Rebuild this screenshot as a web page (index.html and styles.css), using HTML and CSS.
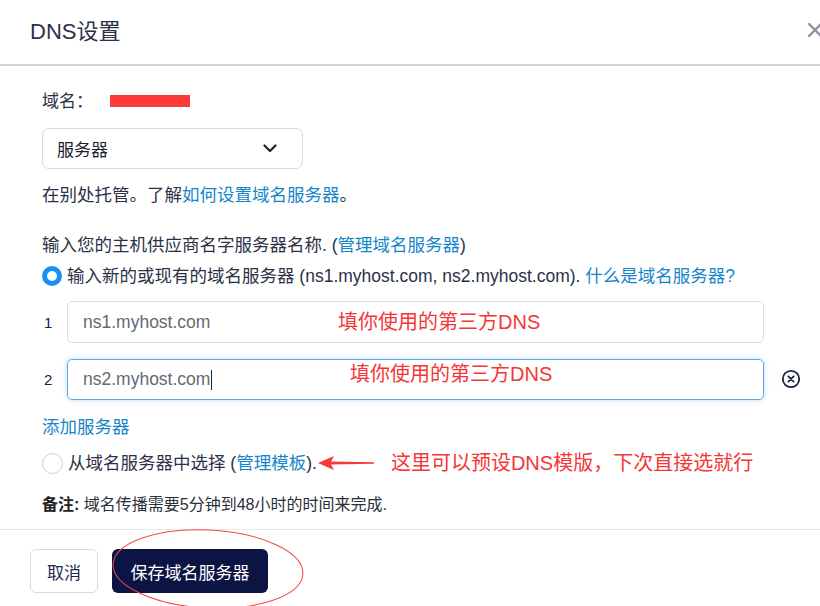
FILE: index.html
```html
<!DOCTYPE html>
<html lang="zh-CN">
<head>
    <meta charset="UTF-8">
    <title>DNS设置</title>
    <link rel="stylesheet" href="styles.css">
</head>
<body>
<div class="modal">
    <!-- Header -->
    <div class="modal-header">
        <h2 class="modal-title">DNS设置</h2>
        <svg class="modal-close" width="16" height="16" viewBox="0 0 16 16"><path d="M2 2 L14 14 M14 2 L2 14" stroke="#8c94a6" stroke-width="2.4" stroke-linecap="round"/></svg>
    </div>

    <div class="modal-body">
        <div class="domain">域名：<span class="masked">y</span></div>

        <div class="select">
            <span>服务器</span>
            <svg class="chevron" width="14" height="9" viewBox="0 0 14 9"><path d="M1.5 1.5 L7 7 L12.5 1.5" fill="none" stroke="#1b2033" stroke-width="2.2" stroke-linecap="round" stroke-linejoin="round"/></svg>
        </div>

        <p class="hint">在别处托管。了解<a href="#">如何设置域名服务器</a>。</p>

        <p class="prompt">输入您的主机供应商名字服务器名称. (<a href="#">管理域名服务器</a>)</p>

        <label class="radio-row">
            <span class="radio checked"></span>
            <span>输入新的或现有的域名服务器 (ns1.myhost.com, ns2.myhost.com). <a href="#">什么是域名服务器?</a></span>
        </label>

        <!-- Name servers -->
        <div class="ns-row first">
            <span class="ns-num">1</span>
            <div class="ns-field">
                <input type="text" value="ns1.myhost.com">
                <span class="note-red note-1">填你使用的第三方DNS</span>
            </div>
        </div>
        <div class="ns-row second">
            <span class="ns-num">2</span>
            <div class="ns-field">
                <div class="input focused">ns2.myhost.com<span class="caret"></span></div>
                <span class="note-red note-2">填你使用的第三方DNS</span>
            </div>
            <svg class="remove" width="20" height="20" viewBox="0 0 20 20"><circle cx="10" cy="10" r="8.2" fill="none" stroke="#1c2340" stroke-width="1.8"/><path d="M7.4 7.4 L12.6 12.6 M12.6 7.4 L7.4 12.6" stroke="#1c2340" stroke-width="1.8" stroke-linecap="round"/></svg>
        </div>

        <a class="add" href="#">添加服务器</a>

        <label class="radio-row second-choice">
            <span class="radio"></span>
            <span>从域名服务器中选择 (<a href="#">管理模板</a>).</span>
            <svg class="arrow" width="58" height="14" viewBox="0 0 58 14"><polygon points="0,7 16,0 13,5.5 56,6.2 56,7.8 13,8.5 16,14" fill="#f53a3a"/></svg>
            <span class="note-red note-3">这里可以预设DNS模版，下次直接选就行</span>
        </label>

        <p class="note"><b>备注:</b> 域名传播需要5分钟到48小时的时间来完成.</p>
    </div>

    <!-- Footer -->
    <div class="modal-footer">
        <button class="btn btn-cancel">取消</button>
        <button class="btn btn-save">保存域名服务器</button>
        <svg class="ellipse" width="200" height="86" viewBox="0 0 200 86"><ellipse cx="100" cy="43" rx="95" ry="39" transform="rotate(3 100 43)" fill="none" stroke="#f04848" stroke-width="1"/></svg>
    </div>
</div>
</body>
</html>
```

FILE: styles.css
```css
body {
    margin: 0;
    font-family: "Liberation Sans", "Noto Sans CJK SC", sans-serif;
    color: #2b3246;
    background: #fff;
    overflow: hidden;
}

a {
    color: #1686c9;
    text-decoration: none;
}

p {
    margin: 0;
}

.modal {
    width: 820px;
    height: 606px;
    overflow: hidden;
}

.modal-header {
    height: 64px;
    display: flex;
    align-items: center;
    justify-content: space-between;
    padding-left: 30px;
    border-bottom: 2px solid #cdd1da;
}

.modal-title {
    margin: 0;
    margin-top: -6px;
    font-size: 22px;
    font-weight: normal;
    color: #2c3344;
}

.modal-close {
    margin-right: -3px;
    margin-top: -4px;
}

.modal-body {
    padding-left: 42px;
    font-size: 17.5px;
}

.domain {
    line-height: 24px;
    margin-top: 24px;
    font-size: 17px;
}

.masked {
    display: inline-block;
    width: 80px;
    height: 12px;
    margin-left: 17px;
    background: #fc3a3a;
    color: transparent;
    vertical-align: -5px;
}

.select {
    margin-top: 14px;
    width: 261px;
    height: 41px;
    box-sizing: border-box;
    border: 1px solid #d6dbe4;
    border-radius: 7px;
    display: flex;
    align-items: center;
    justify-content: space-between;
    padding: 0 25px 0 14px;
    font-size: 17px;
    color: #1b2033;
}

.hint {
    margin-top: 14px;
    line-height: 24px;
}

.prompt {
    margin-top: 26px;
    line-height: 24px;
}

.radio-row {
    display: flex;
    align-items: center;
    line-height: 24px;
    margin-top: 7px;
    white-space: nowrap;
}

.radio {
    width: 20px;
    height: 20px;
    box-sizing: border-box;
    border-radius: 50%;
    border: 1px solid #c7cde0;
    margin-right: 5px;
    flex: none;
}

.radio.checked {
    border: 5.5px solid #1890f5;
}

.ns-row {
    display: flex;
    align-items: center;
}

.ns-row.first {
    margin-top: 13px;
    height: 42px;
}

.ns-row.second {
    margin-top: 16px;
    height: 41px;
}

.ns-num {
    width: 25px;
    box-sizing: border-box;
    padding-left: 2px;
    font-size: 15px;
    color: #1b2240;
}

.ns-field {
    position: relative;
    width: 697px;
    height: 100%;
}

.ns-field input,
.ns-field .input {
    width: 100%;
    height: 100%;
    box-sizing: border-box;
    border: 1px solid #d9dde4;
    border-radius: 5px;
    padding: 0 15px;
    font-family: inherit;
    font-size: 17.5px;
    color: #666a70;
    outline: none;
}

.ns-field .input {
    display: flex;
    align-items: center;
}

.ns-field .focused {
    border-color: #62a7e6;
    box-shadow: 0 0 5px rgba(98, 167, 230, 0.45);
}

.caret {
    display: inline-block;
    width: 1px;
    height: 20px;
    background: #222;
    margin-left: 1px;
}

.note-red {
    position: absolute;
    color: #f53636;
    font-size: 20px;
    line-height: 26px;
    white-space: nowrap;
}

.note-1 {
    left: 271px;
    top: 8px;
}

.note-2 {
    left: 283px;
    top: 2px;
}

.remove {
    margin-left: 17px;
    margin-top: -2px;
}

.add {
    display: block;
    line-height: 24px;
    margin-top: 15px;
    width: max-content;
}

.radio-row.second-choice {
    margin-top: 11px;
    position: relative;
}

.second-choice .radio {
    width: 21px;
    height: 21px;
}

.arrow {
    margin-left: 1px;
}

.note-3 {
    position: static;
    font-size: 20px;
    margin-left: 15px;
}

.note {
    margin-top: 17px;
    line-height: 24px;
    font-size: 16px;
    color: #2b2f38;
}

.note b {
    color: #222;
}

.modal-footer {
    position: relative;
    margin-top: 12px;
    border-top: 1px solid #e7e9ee;
    padding: 19px 0 0 30px;
    display: flex;
    gap: 14px;
}

.btn {
    height: 44px;
    border-radius: 6px;
    font-family: inherit;
    font-size: 17px;
    cursor: pointer;
}

.btn-cancel {
    width: 68px;
    background: #fff;
    border: 1px solid #d6dbe4;
    color: #1e2a4a;
}

.btn-save {
    width: 156px;
    background: #0b1442;
    border: none;
    color: #fff;
}

.ellipse {
    position: absolute;
    left: 108px;
    top: -4px;
}
```
